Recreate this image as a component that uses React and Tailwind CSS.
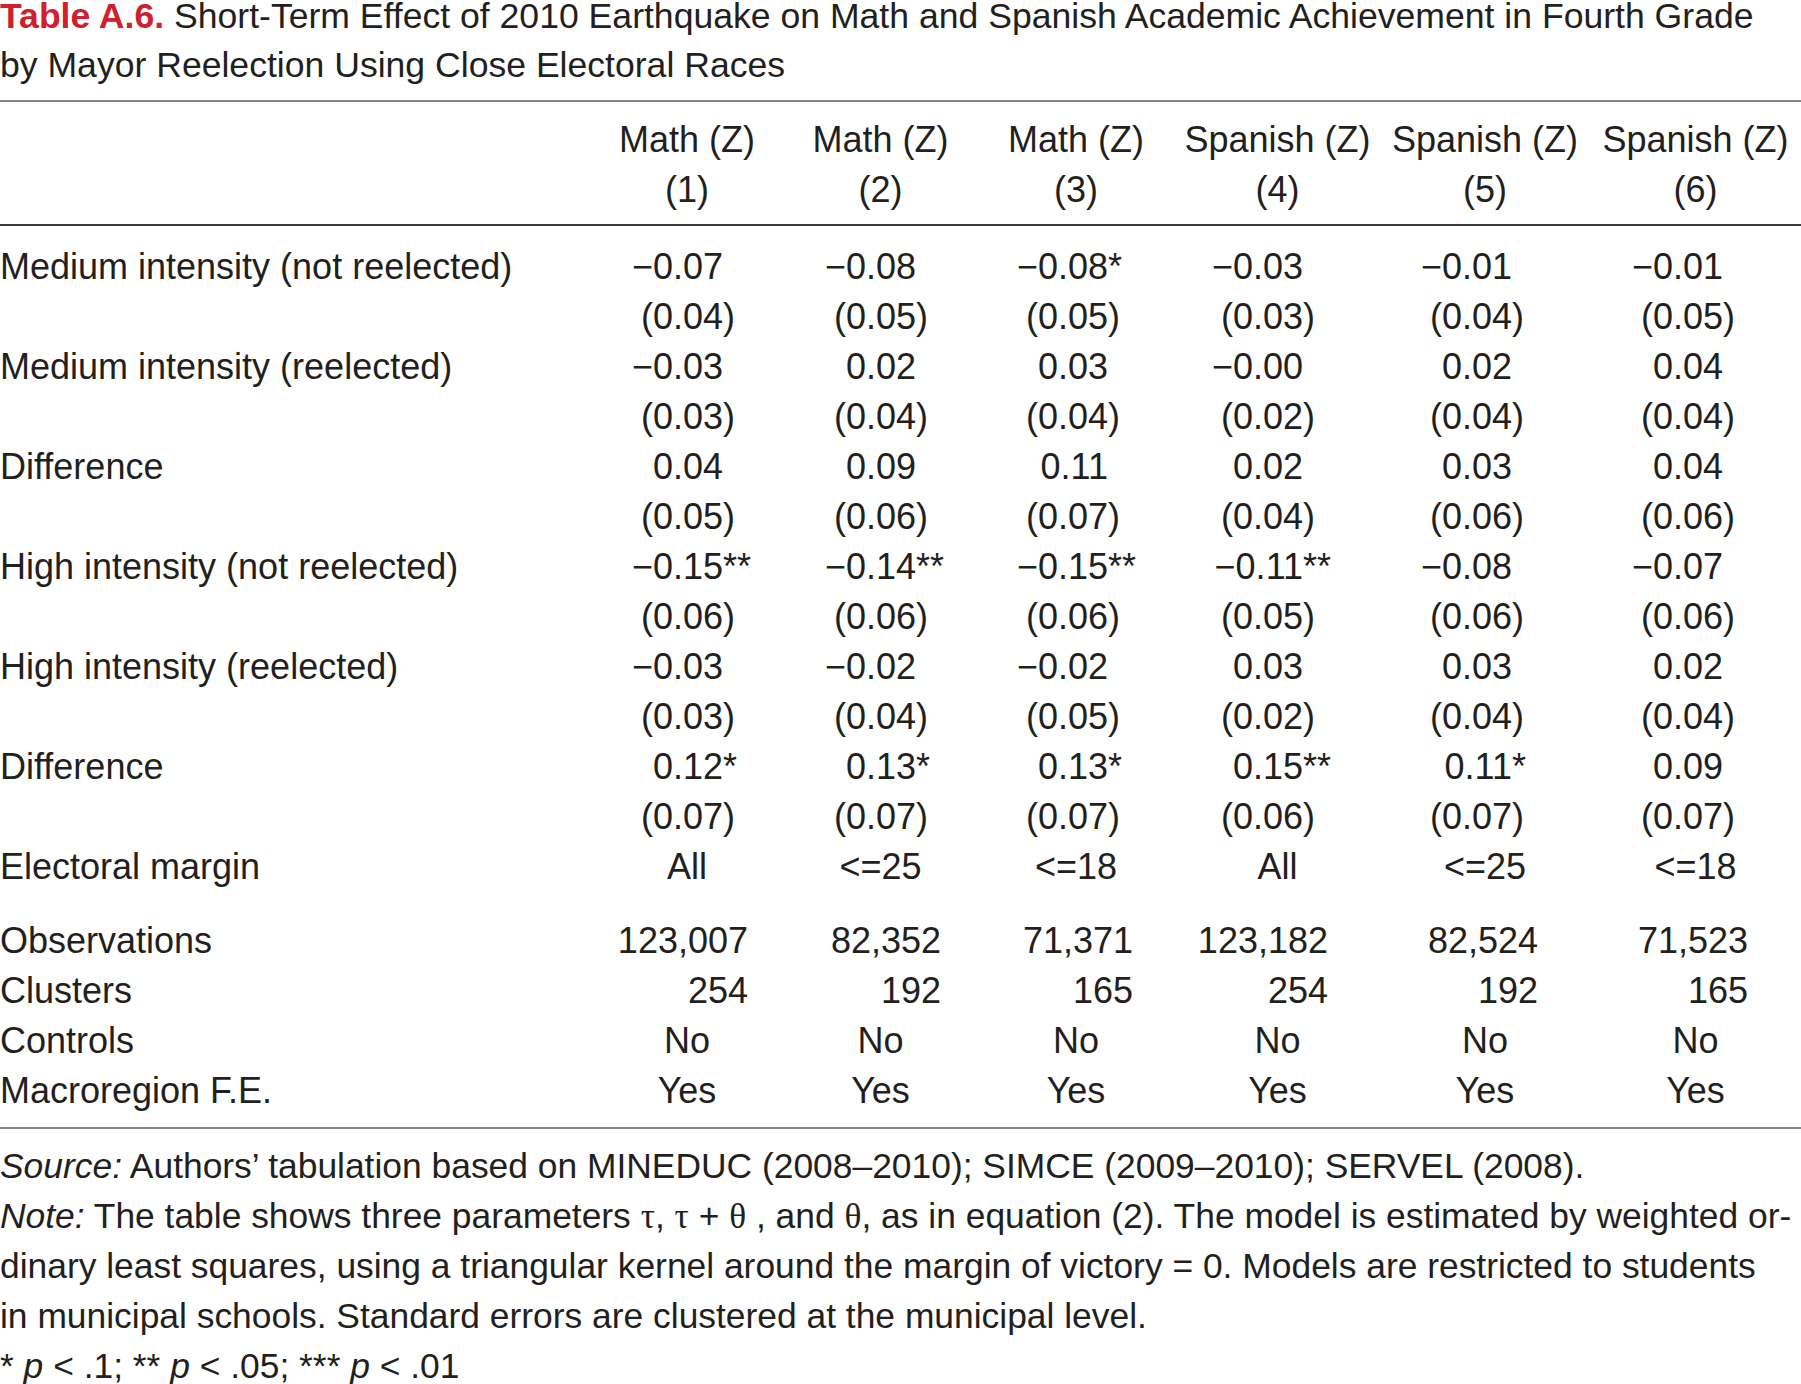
import React from "react";

// column templates: label col + 6 result cols
const GRID = "grid grid-cols-[590px_194px_193px_198px_205px_210px_211px]";
const ANCHOR = ["w-[133px]", "w-[132px]", "w-[131px]", "w-[128px]", "w-[132px]", "w-[133px]"];
const OBS_ANCHOR = ["w-[158px]", "w-[157px]", "w-[156px]", "w-[153px]", "w-[158px]", "w-[158px]"];

const headers = [
  ["Math (Z)", "(1)"],
  ["Math (Z)", "(2)"],
  ["Math (Z)", "(3)"],
  ["Spanish (Z)", "(4)"],
  ["Spanish (Z)", "(5)"],
  ["Spanish (Z)", "(6)"],
];

const coefRows = [
  ["Medium intensity (not reelected)", ["−0.07", "−0.08", "−0.08*", "−0.03", "−0.01", "−0.01"]],
  ["", ["(0.04)", "(0.05)", "(0.05)", "(0.03)", "(0.04)", "(0.05)"]],
  ["Medium intensity (reelected)", ["−0.03", "0.02", "0.03", "−0.00", "0.02", "0.04"]],
  ["", ["(0.03)", "(0.04)", "(0.04)", "(0.02)", "(0.04)", "(0.04)"]],
  ["Difference", ["0.04", "0.09", "0.11", "0.02", "0.03", "0.04"]],
  ["", ["(0.05)", "(0.06)", "(0.07)", "(0.04)", "(0.06)", "(0.06)"]],
  ["High intensity (not reelected)", ["−0.15**", "−0.14**", "−0.15**", "−0.11**", "−0.08", "−0.07"]],
  ["", ["(0.06)", "(0.06)", "(0.06)", "(0.05)", "(0.06)", "(0.06)"]],
  ["High intensity (reelected)", ["−0.03", "−0.02", "−0.02", "0.03", "0.03", "0.02"]],
  ["", ["(0.03)", "(0.04)", "(0.05)", "(0.02)", "(0.04)", "(0.04)"]],
  ["Difference", ["0.12*", "0.13*", "0.13*", "0.15**", "0.11*", "0.09"]],
  ["", ["(0.07)", "(0.07)", "(0.07)", "(0.06)", "(0.07)", "(0.07)"]],
];

const observations = ["123,007", "82,352", "71,371", "123,182", "82,524", "71,523"];
const clusters = ["254", "192", "165", "254", "192", "165"];

// split "−0.15**" into number and hanging suffix so decimals line up
const splitValue = (v) => {
  if (v.startsWith("(")) return [v.slice(0, -1), ")"];
  const m = v.match(/^(.*?)(\**)$/);
  return [m[1], m[2]];
};

const CoefCell = ({ value, col }) => {
  const [num, suffix] = splitValue(value);
  return (
    <div className="flex whitespace-nowrap">
      <span className={`${ANCHOR[col]} shrink-0 text-right`}>{num}</span>
      <span>{suffix}</span>
    </div>
  );
};

const Row = ({ label, children }) => (
  <div className={GRID}>
    <div className="whitespace-nowrap">{label}</div>
    {children}
  </div>
);

const P = () => <span className="italic">p</span>;
const Greek = ({ children }) => <span className="font-['Liberation_Serif',serif]">{children}</span>;

export default function App() {
  return (
    <div className="w-[1801px] h-[1384px] overflow-hidden bg-white text-[#231f20] font-['Liberation_Sans',Arial,sans-serif] text-[36px] leading-[50px] flex flex-col">
      {/* Title */}
      <div className="shrink-0 -mt-[8px] text-[35.6px] leading-[49px] whitespace-nowrap">
        <div>
          <span className="font-bold text-[#cf202e]">Table A.6.</span> Short-Term Effect of 2010 Earthquake on Math
          and Spanish Academic Achievement in Fourth Grade
        </div>
        <div>by Mayor Reelection Using Close Electoral Races</div>
      </div>

      <div className="shrink-0 mt-[10px] h-[2px] bg-[#858585]" />

      {/* Column headers */}
      <div className={`${GRID} shrink-0 mt-[13px]`}>
        <div />
        {headers.map(([name, num], i) => (
          <div key={i} className="text-center whitespace-nowrap">
            <div>{name}</div>
            <div>{num}</div>
          </div>
        ))}
      </div>

      <div className="shrink-0 mt-[9px] h-[2px] bg-[#3a3a3a]" />

      {/* Coefficients */}
      <div className="shrink-0 mt-[16px]">
        {coefRows.map(([label, vals], r) => (
          <Row key={r} label={label}>
            {vals.map((v, c) => (
              <CoefCell key={c} value={v} col={c} />
            ))}
          </Row>
        ))}
        <Row label="Electoral margin">
          {["All", "<=25", "<=18", "All", "<=25", "<=18"].map((v, c) => (
            <div key={c} className="text-center">
              {v}
            </div>
          ))}
        </Row>
      </div>

      {/* Sample info */}
      <div className="shrink-0 mt-[24px]">
        <Row label="Observations">
          {observations.map((v, c) => (
            <div key={c} className={`${OBS_ANCHOR[c]} text-right`}>
              {v}
            </div>
          ))}
        </Row>
        <Row label="Clusters">
          {clusters.map((v, c) => (
            <div key={c} className={`${OBS_ANCHOR[c]} text-right`}>
              {v}
            </div>
          ))}
        </Row>
        <Row label="Controls">
          {observations.map((_, c) => (
            <div key={c} className="text-center">
              No
            </div>
          ))}
        </Row>
        <Row label="Macroregion F.E.">
          {observations.map((_, c) => (
            <div key={c} className="text-center">
              Yes
            </div>
          ))}
        </Row>
      </div>

      <div className="shrink-0 mt-[11px] h-[2px] bg-[#858585]" />

      {/* Notes */}
      <div className="shrink-0 mt-[12px] text-[35.4px] whitespace-nowrap">
        <div>
          <span className="italic">Source:</span> Authors’ tabulation based on MINEDUC (2008–2010); SIMCE
          (2009–2010); SERVEL (2008).
        </div>
        <div>
          <span className="italic">Note:</span> The table shows three parameters <Greek>τ</Greek>,{" "}
          <Greek>τ</Greek> + <Greek>θ</Greek> , and <Greek>θ</Greek>, as in equation (2). The model is estimated by
          weighted or-
        </div>
        <div>
          dinary least squares, using a triangular kernel around the margin of victory = 0. Models are restricted to
          students
        </div>
        <div>in municipal schools. Standard errors are clustered at the municipal level.</div>
        <div>
          * <P /> &lt; .1; ** <P /> &lt; .05; *** <P /> &lt; .01
        </div>
      </div>
    </div>
  );
}
